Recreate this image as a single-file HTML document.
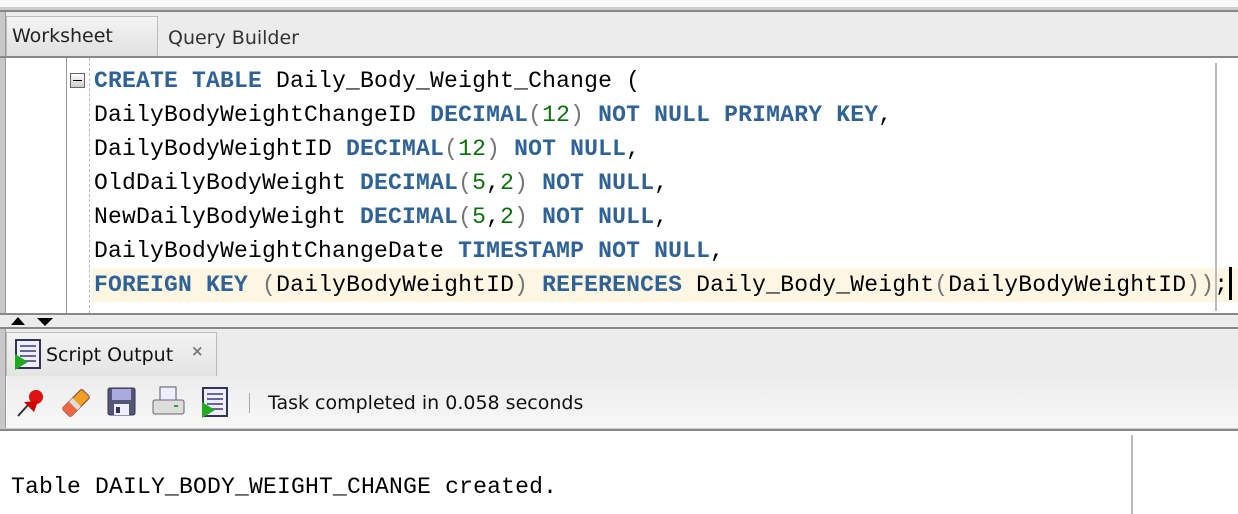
<!DOCTYPE html>
<html><head><style>
*{margin:0;padding:0;box-sizing:border-box}
body{width:1238px;height:514px;overflow:hidden;background:#fff;position:relative;font-family:"DejaVu Sans","Liberation Sans",sans-serif}
.abs{position:absolute}
.code{font-family:"Liberation Mono","Courier New",monospace;font-size:23px;letter-spacing:0.2px;color:#000;white-space:pre;line-height:34px}
.k{color:#2f6296;font-weight:bold}
.n{color:#0a6e0a}
.p{color:#777}
.t{font-size:19px}
</style></head><body>
<div class="abs" style="left:0;top:0;width:1238px;height:8px;background:#fafafa"></div>
<div class="abs" style="left:0;top:7px;width:1238px;height:5px;background:#ccc;border-bottom:2px solid #888"></div>
<div class="abs" style="left:0;top:12px;width:1238px;height:45px;background:#ececec"></div>
<div class="abs" style="left:0;top:12px;width:6px;height:302px;background:#c8c8c8;border-right:1px solid #999"></div>
<div class="abs" style="left:6px;top:16px;width:152px;height:41px;background:linear-gradient(#f4f4f4,#e0e0e0);border:1px solid #bbb;border-bottom:none"></div>
<div class="abs t" style="left:12px;top:25px;color:#222">Worksheet</div>
<div class="abs t" style="left:168px;top:27px;color:#333">Query Builder</div>
<div class="abs" style="left:0;top:56px;width:1238px;height:2px;background:#888"></div>
<div class="abs" style="left:7px;top:58px;width:1231px;height:255px;background:#fff"></div>
<div class="abs" style="left:66px;top:58px;width:1px;height:255px;background:#999"></div>
<div class="abs" style="left:89px;top:58px;width:0;height:255px;border-left:1px dashed #bbb"></div>
<div class="abs" style="left:92px;top:268px;width:1146px;height:34px;background:#fdf6e3"></div>
<div class="abs" style="left:1215px;top:63px;width:2px;height:248px;background:#bbb"></div>
<div class="abs" style="left:1229px;top:267px;width:3px;height:33px;background:#000"></div>
<div class="abs" style="left:70px;top:73px;width:15px;height:15px;border:1px solid #666;background:linear-gradient(#fff,#ccc)"><div style="margin:6px 2px 0;height:1px;background:#000"></div></div>
<div class="abs code" style="left:94px;top:64px"><span class="k">CREATE TABLE</span> Daily_Body_Weight_Change (
DailyBodyWeightChangeID <span class="k">DECIMAL</span><span class="p">(</span><span class="n">12</span><span class="p">)</span> <span class="k">NOT NULL PRIMARY KEY</span>,
DailyBodyWeightID <span class="k">DECIMAL</span><span class="p">(</span><span class="n">12</span><span class="p">)</span> <span class="k">NOT NULL</span>,
OldDailyBodyWeight <span class="k">DECIMAL</span><span class="p">(</span><span class="n">5</span>,<span class="n">2</span><span class="p">)</span> <span class="k">NOT NULL</span>,
NewDailyBodyWeight <span class="k">DECIMAL</span><span class="p">(</span><span class="n">5</span>,<span class="n">2</span><span class="p">)</span> <span class="k">NOT NULL</span>,
DailyBodyWeightChangeDate <span class="k">TIMESTAMP NOT NULL</span>,
<span class="k">FOREIGN KEY</span> <span class="p">(</span>DailyBodyWeightID<span class="p">)</span> <span class="k">REFERENCES</span> Daily_Body_Weight<span class="p">(</span>DailyBodyWeightID<span class="p">))</span>;</div>
<div class="abs" style="left:0;top:313px;width:1238px;height:2px;background:#888"></div>
<div class="abs" style="left:0;top:315px;width:1238px;height:13px;background:#ececec"></div>
<div class="abs" style="left:11px;top:317px;width:0;height:0;border-left:7px solid transparent;border-right:7px solid transparent;border-bottom:8px solid #000"></div>
<div class="abs" style="left:37px;top:318px;width:0;height:0;border-left:8px solid transparent;border-right:8px solid transparent;border-top:8px solid #000"></div>
<div class="abs" style="left:0;top:327px;width:1238px;height:2px;background:#888"></div>
<div class="abs" style="left:0;top:329px;width:1238px;height:47px;background:#ececec"></div>
<div class="abs" style="left:0;top:329px;width:6px;height:102px;background:#c8c8c8;border-right:1px solid #999"></div>
<div class="abs" style="left:6px;top:332px;width:211px;height:44px;background:linear-gradient(#f2f2f2,#e4e4e4);border:1px solid #bbb;border-bottom:none"></div>
<svg class="abs" style="left:14px;top:339px" width="28" height="32"><rect x="2" y="1" width="24" height="28" fill="#eef" stroke="#335" stroke-width="2"/><g stroke="#669" stroke-width="2"><line x1="6" y1="7" x2="22" y2="7"/><line x1="6" y1="12" x2="22" y2="12"/><line x1="6" y1="17" x2="22" y2="17"/><line x1="6" y1="22" x2="22" y2="22"/></g><polygon points="1,15 1,31 14,23" fill="#2a2"/></svg>
<div class="abs t" style="left:46px;top:344px;color:#111">Script Output</div>
<div class="abs" style="left:191px;top:342px;font-size:15px;color:#777;font-weight:bold">×</div>
<div class="abs" style="left:7px;top:376px;width:1231px;height:53px;background:linear-gradient(#ececec,#f8f8f8)"></div>
<svg class="abs" style="left:16px;top:388px" width="32" height="30"><line x1="2" y1="28" x2="12" y2="17" stroke="#333" stroke-width="2"/><circle cx="20" cy="9" r="7" fill="#d11"/><polygon points="8,14 18,24 22,13" fill="#c00"/></svg>
<svg class="abs" style="left:60px;top:387px" width="32" height="32"><g transform="rotate(-45 16 16)"><rect x="2" y="10" width="28" height="12" rx="2" fill="#f0a020" stroke="#844" stroke-width="1"/><rect x="2" y="10" width="10" height="12" fill="#e64"/><rect x="12" y="10" width="5" height="12" fill="#ddd"/></g></svg>
<svg class="abs" style="left:107px;top:387px" width="30" height="30"><rect x="1" y="1" width="27" height="27" rx="2" fill="#557" stroke="#335"/><rect x="5" y="2" width="19" height="11" fill="#aad"/><rect x="7" y="17" width="15" height="11" fill="#eef"/><rect x="9" y="20" width="4" height="6" fill="#335"/></svg>
<svg class="abs" style="left:152px;top:386px" width="34" height="32"><rect x="8" y="1" width="16" height="14" fill="#eef" stroke="#556"/><rect x="1" y="14" width="31" height="14" rx="2" fill="#ddd" stroke="#666"/><rect x="22" y="19" width="4" height="2" fill="#2a2"/></svg>
<svg class="abs" style="left:200px;top:387px" width="30" height="32"><rect x="3" y="1" width="24" height="28" fill="#eef" stroke="#335" stroke-width="2"/><g stroke="#669" stroke-width="2"><line x1="7" y1="7" x2="23" y2="7"/><line x1="7" y1="12" x2="23" y2="12"/><line x1="7" y1="17" x2="23" y2="17"/><line x1="7" y1="22" x2="23" y2="22"/></g><polygon points="2,15 2,31 15,23" fill="#2a2"/></svg>
<div class="abs" style="left:249px;top:393px;width:1px;height:20px;background:#aaa"></div>
<div class="abs t" style="left:268px;top:392px;color:#111">Task completed in 0.058 seconds</div>
<div class="abs" style="left:0;top:428px;width:1238px;height:3px;background:#ccc;border-bottom:2px solid #888"></div>
<div class="abs" style="left:1131px;top:435px;width:2px;height:79px;background:#bbb"></div>
<div class="abs code" style="left:11px;top:470px">Table DAILY_BODY_WEIGHT_CHANGE created.</div>
</body></html>
